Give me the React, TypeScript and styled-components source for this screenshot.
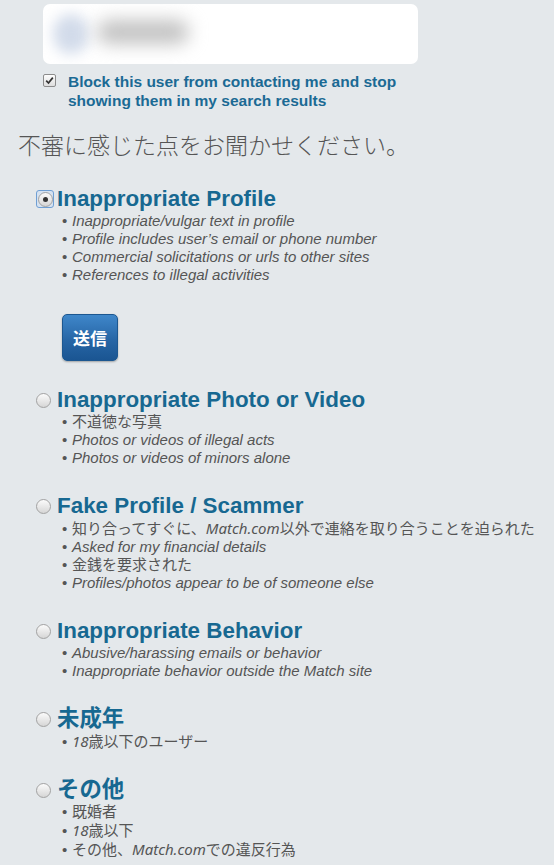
import { FC } from 'react';
import styled, { createGlobalStyle } from 'styled-components';

type Seg = { text: string; latin?: boolean };
type Reason = { title: string; selected?: boolean; submit?: boolean; items: Seg[][] };

const en = (text: string): Seg => ({ text, latin: true });
const ja = (text: string): Seg => ({ text });

const reasons: Reason[] = [
  {
    title: 'Inappropriate Profile',
    selected: true,
    submit: true,
    items: [
      [en('Inappropriate/vulgar text in profile')],
      [en('Profile includes user’s email or phone number')],
      [en('Commercial solicitations or urls to other sites')],
      [en('References to illegal activities')],
    ],
  },
  {
    title: 'Inappropriate Photo or Video',
    items: [
      [ja('不道徳な写真')],
      [en('Photos or videos of illegal acts')],
      [en('Photos or videos of minors alone')],
    ],
  },
  {
    title: 'Fake Profile / Scammer',
    items: [
      [ja('知り合ってすぐに、'), en('Match.com'), ja('以外で連絡を取り合うことを迫られた')],
      [en('Asked for my financial details')],
      [ja('金銭を要求された')],
      [en('Profiles/photos appear to be of someone else')],
    ],
  },
  {
    title: 'Inappropriate Behavior',
    items: [
      [en('Abusive/harassing emails or behavior')],
      [en('Inappropriate behavior outside the Match site')],
    ],
  },
  {
    title: '未成年',
    items: [[en('18'), ja('歳以下のユーザー')]],
  },
  {
    title: 'その他',
    items: [
      [ja('既婚者')],
      [en('18'), ja('歳以下')],
      [ja('その他、'), en('Match.com'), ja('での違反行為')],
    ],
  },
];

const GlobalStyle = createGlobalStyle`
  html, body {
    margin: 0;
    background: #e4e8eb;
  }
  body {
    font-family: "Liberation Sans", "Noto Sans CJK JP", sans-serif;
  }
`;

const Page = styled.div`
  padding: 4px 0 24px;
`;

const UserBlock = styled.div`
  margin-left: 43px;
  width: 375px;
`;

const UserCard = styled.div`
  height: 60px;
  border-radius: 7px;
  background: #fff;
  display: flex;
  align-items: center;
  gap: 8px;
  padding-left: 10px;
  overflow: hidden;
`;

// the profile preview is kept blurred
const BlurredAvatar = styled.div`
  width: 36px;
  height: 40px;
  border-radius: 50%;
  background: #d2dbea;
  filter: blur(7px);
`;

const BlurredName = styled.div`
  width: 92px;
  height: 24px;
  margin-top: -4px;
  border-radius: 12px;
  background: #c2c2c2;
  filter: blur(9px);
`;

const BlockRow = styled.label`
  display: flex;
  gap: 12px;
  margin-top: 8px;
`;

const CheckBox = styled.span`
  flex: none;
  width: 11px;
  height: 11px;
  margin-top: 2px;
  border: 1px solid #8c8c8c;
  border-radius: 2px;
  background: linear-gradient(#fdfdfd, #dedede);
  display: grid;
  place-items: center;
`;

const BlockText = styled.span`
  width: 340px;
  color: #1b6a94;
  font-size: 15.5px;
  font-weight: bold;
  line-height: 19px;
`;

const Heading = styled.h2`
  margin: 18px 0 0 18px;
  color: #555;
  font-family: "Noto Sans CJK JP", sans-serif;
  font-size: 23px;
  font-weight: 300;
  line-height: 32px;
`;

const ReasonList = styled.div`
  margin: 26px 0 0 36px;
  display: flex;
  flex-direction: column;
  gap: 26px;
`;

const ReasonBlock = styled.div`
  display: flex;
  flex-direction: column;
`;

const TitleRow = styled.label`
  display: flex;
  align-items: center;
  gap: 3px;
  height: 26px;
`;

const RadioSlot = styled.span<{ $focused?: boolean }>`
  flex: none;
  width: 18px;
  height: 18px;
  box-sizing: border-box;
  display: flex;
  align-items: center;
  justify-content: ${({ $focused }) => ($focused ? 'center' : 'flex-start')};
  border: ${({ $focused }) => ($focused ? '1px solid #6f9fd4' : 'none')};
  border-radius: 3px;
  background: ${({ $focused }) => ($focused ? '#d6e2f0' : 'transparent')};
`;

const RadioDot = styled.span<{ $checked?: boolean }>`
  width: 13px;
  height: 13px;
  border: 1px solid #a2a2a2;
  border-radius: 50%;
  background: linear-gradient(#fbfbfb, #d6d6d6);
  display: grid;
  place-items: center;

  &::after {
    content: '';
    width: 5px;
    height: 5px;
    border-radius: 50%;
    background: ${({ $checked }) => ($checked ? '#333' : 'transparent')};
  }
`;

const Title = styled.span`
  color: #176891;
  font-size: 22.4px;
  font-weight: bold;
  line-height: 26px;
  white-space: nowrap;
`;

const Bullets = styled.ul`
  margin: 0 0 0 26px;
  padding: 0;
  list-style: none;
`;

const Bullet = styled.li<{ $mixed?: boolean }>`
  color: #555;
  font-family: ${({ $mixed }) =>
    $mixed ? '"Noto Sans", "Noto Sans CJK JP", sans-serif' : '"Liberation Sans", "Noto Sans CJK JP", sans-serif'};
  font-size: 15px;
  line-height: 18px;
  white-space: nowrap;

  &::before {
    content: '•';
    display: inline-block;
    width: 10px;
    font-family: "Liberation Sans", sans-serif;
    font-style: normal;
  }
`;

const Latin = styled.em`
  font-style: italic;
`;

const SubmitButton = styled.button`
  align-self: flex-start;
  margin: 30px 0 0 26px;
  width: 56px;
  height: 47px;
  padding: 0;
  border: 1px solid #1c5790;
  border-radius: 5px;
  background: linear-gradient(#3f87ca, #2766a6 55%, #1a5592);
  box-shadow: 0 1px 2px rgba(0, 0, 0, 0.3);
  color: #fff;
  font-family: "Noto Sans CJK JP", sans-serif;
  font-size: 17px;
  font-weight: bold;
`;

const Check = () => (
  <svg width="9" height="9" viewBox="0 0 9 9">
    <path d="M1.2 4.6 L3.5 7 L7.8 1.6" fill="none" stroke="#333" strokeWidth="1.7" />
  </svg>
);

const hasJapanese = (segs: Seg[]) => segs.some((s) => !s.latin);

const ReasonItem: FC<{ reason: Reason }> = ({ reason }) => (
  <ReasonBlock>
    <TitleRow>
      <RadioSlot $focused={reason.selected}>
        <RadioDot $checked={reason.selected} />
      </RadioSlot>
      <Title>{reason.title}</Title>
    </TitleRow>
    <Bullets>
      {reason.items.map((segs, i) => (
        <Bullet key={i} $mixed={hasJapanese(segs) && segs.length > 1}>
          {segs.map((s, j) => (s.latin ? <Latin key={j}>{s.text}</Latin> : <span key={j}>{s.text}</span>))}
        </Bullet>
      ))}
    </Bullets>
    {reason.submit && <SubmitButton>送信</SubmitButton>}
  </ReasonBlock>
);

const App: FC = () => (
  <Page>
    <GlobalStyle />
    <UserBlock>
      <UserCard>
        <BlurredAvatar />
        <BlurredName />
      </UserCard>
      <BlockRow>
        <CheckBox>
          <Check />
        </CheckBox>
        <BlockText>Block this user from contacting me and stop showing them in my search results</BlockText>
      </BlockRow>
    </UserBlock>
    <Heading>不審に感じた点をお聞かせください。</Heading>
    <ReasonList>
      {reasons.map((r) => (
        <ReasonItem key={r.title} reason={r} />
      ))}
    </ReasonList>
  </Page>
);

export default App;
